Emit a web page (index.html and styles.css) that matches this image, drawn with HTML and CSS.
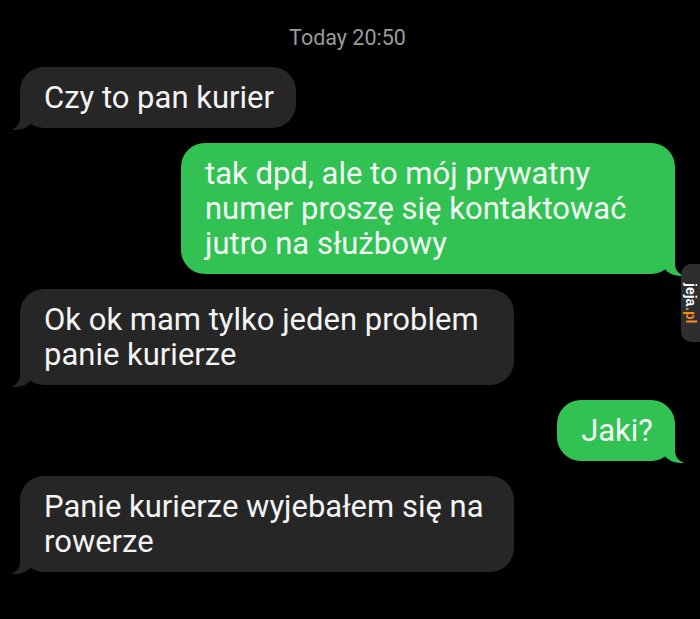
FILE: index.html
```html
<!DOCTYPE html>
<html>
<head>
  <meta charset="UTF-8" />
  <meta name="viewport" content="width=device-width, initial-scale=1.0" />
  <title>Kurier</title>
  <link rel="stylesheet" href="styles.css">
</head>
<body>

  <div class="chat">
    <div class="time">Today 20:50</div>

    <div class="bubble them">Czy to pan kurier</div>
    <div class="bubble me">tak dpd, ale to mój prywatny numer proszę się kontaktować jutro na służbowy</div>
    <div class="bubble them">Ok ok mam tylko jeden problem panie kurierze</div>
    <div class="bubble me">Jaki?</div>
    <div class="bubble them">Panie kurierze wyjebałem się na rowerze</div>
  </div>

  <div class="mark"><span>jeja</span><span class="dot">.pl</span></div>

</body>
</html>
```

FILE: styles.css
```css
body {
  margin: 0;
  background: #000;
  font-family: Roboto, "Liberation Sans", Arial, sans-serif;
  color: #fff;
}

.chat {
  display: flex;
  flex-direction: column;
  padding: 26px 25px 0 20px;
}

.time {
  align-self: center;
  font-size: 21.5px;
  line-height: 24px;
  color: #9a9a9a;
  margin-bottom: 17px;
}

.bubble {
  position: relative;
  box-sizing: border-box;
  max-width: 494px;
  padding: 13px 22px 13px 24px;
  border-radius: 24px;
  font-size: 31px;
  line-height: 35px;
  margin-bottom: 15px;
  color: #f4f4f4;
}

.them {
  align-self: flex-start;
  background: #262626;
}

.me {
  align-self: flex-end;
  background: #32c254;
  color: #f2fbf4;
}

/* ogonki dymków */
.bubble::before,
.bubble::after {
  content: "";
  position: absolute;
  bottom: -2px;
  height: 26px;
}

.them::before {
  left: -8px;
  width: 22px;
  background: #262626;
  border-bottom-right-radius: 18px 15px;
}

.them::after {
  left: -26px;
  width: 26px;
  background: #000;
  border-bottom-right-radius: 12px;
}

.me::before {
  right: -9px;
  width: 22px;
  background: #32c254;
  border-bottom-left-radius: 18px 15px;
}

.me::after {
  right: -26px;
  width: 26px;
  background: #000;
  border-bottom-left-radius: 12px;
}

.mark {
  position: absolute;
  top: 264px;
  right: 0;
  width: 19px;
  height: 78px;
  background: #2e2e30;
  border-radius: 10px 0 0 10px;
  writing-mode: vertical-rl;
  display: flex;
  align-items: center;
  justify-content: center;
  font-family: "Liberation Sans", Arial, sans-serif;
  font-weight: bold;
  font-size: 14px;
  color: #fff;
}

.dot {
  color: #f08a1c;
}
```
